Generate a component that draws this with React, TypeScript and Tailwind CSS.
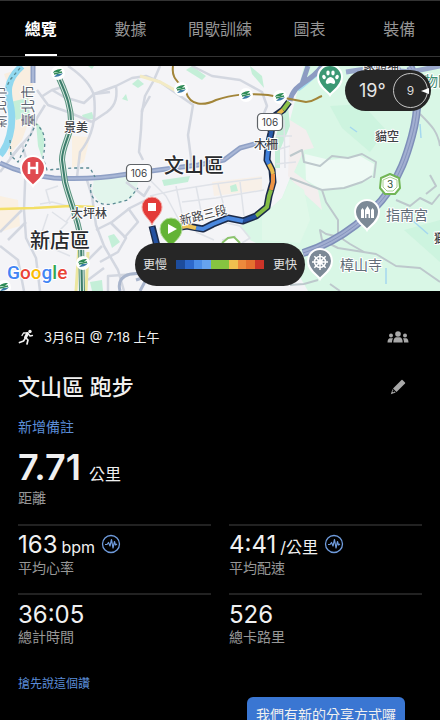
const tabs = ['總覽', '數據', '間歇訓練', '圖表', '裝備'];

const paceColors = [
  'bg-[#1d4c9c]',
  'bg-[#2d69cc]',
  'bg-[#4c8ee8]',
  'bg-[#66a3ef]',
  'bg-[#86c440]',
  'bg-[#86c440]',
  'bg-[#f0c04f]',
  'bg-[#ed8a3c]',
  'bg-[#e4702f]',
  'bg-[#cb3428]',
];

const minorRoads = [
  'M37 90 L48 105 L68 112 L92 122',
  'M41 97 L52 90 L66 86 M52 90 L64 97 L84 103 L94 94 L110 92',
  'M68 66 C80 74 91 84 94 96 C97 122 90 140 80 152 L77 177',
  'M94 94 L116 86 L132 78 L146 76 L160 82 L193 105 L188 135 L192 166',
  'M116 86 C118 100 114 108 104 114 L92 122',
  'M150 96 L142 110 L141 130 L139 152 L143 160',
  'M160 66 L154 80 L145 96 L142 112',
  'M192 66 L212 76 L240 80 L262 92 L267 106 L262 118',
  'M37 118 L45 105 M37 118 L31 134 L10 158',
  'M0 172 L22 144 L26 158 L24 210 L26 238 L36 258 L40 291',
  'M0 232 L22 210 M0 246 L18 260 L24 291 M8 240 L26 222',
  'M86 177 L92 196 L96 225 L104 246 L118 270 L124 291',
  'M96 230 L112 222 L130 208 L146 200 M110 222 L126 238 L118 252 L100 262',
  'M126 182 L144 196 L150 186 M128 208 L138 222 L124 238',
  'M86 262 L102 246 M88 280 L104 268 M108 291 L108 276 L136 274',
];

const lanes = [
  'M40 204 L52 202 L68 206 L88 214',
  'M50 204 L46 190 L58 186 M52 212 L66 222 L72 214 M58 232 L68 222',
  'M48 214 L42 232 L56 250 L70 256',
  'M150 180 L166 196 L180 222 M176 186 L182 214 M150 196 L176 190 L214 184 L262 178',
  'M182 202 L216 198 L264 190 M196 186 L202 216 M218 184 L226 214 M240 182 L244 216',
  'M222 222 L240 226 L250 238 L242 243 M236 236 L222 240 M196 232 L214 240',
  'M276 150 L290 146 M276 136 L292 136 M284 120 L285 168 M276 164 L296 162',
];

const hillRoads = [
  'M290 156 L302 150 L304 162 L320 166 L332 156 L348 158 L362 154 L376 162 L374 178',
  'M290 178 L306 184 L322 190 L326 202 L338 220 L338 236 L350 244 L364 252',
  'M322 190 L344 188 L362 182 L372 176',
  'M344 238 L326 234 L320 230 L322 240 L338 248 L376 254 L396 266 L420 268 L440 282',
  'M396 200 L410 206 L420 198 L432 204 L440 194 M430 175 L436 186 L426 194',
  'M420 114 C432 126 438 132 440 146',
  'M304 284 L318 280 M330 284 L340 291 M290 285 L304 284',
];

const parks = [
  'M10 102 L28 98 L30 116 L16 120 Z',
  'M82 115 L92 112 L94 119 L84 120 Z',
  'M122 99 L126 94 L128 101 Z',
  'M132 84 L138 79 L144 84 L138 88 Z',
  'M88 66 L94 66 L92 69 Z',
  'M36 122 C44 128 46 140 42 158 L38 146 Z',
  'M108 236 L114 234 L120 242 L112 248 Z',
  'M90 282 L102 280 L103 291 L92 291 Z',
  'M162 180 L190 176 L188 182 L164 186 Z',
  'M230 186 L236 184 L238 191 L231 192 Z',
  'M192 66 L206 76 L202 80 L186 70 Z',
  'M250 66 L262 76 L264 88 L252 74 Z',
  'M282 114 L288 106 L290 126 L280 150 L280 168 L275 168 L275 140 Z',
];

function StationMark({ x, y }: { x: number; y: number }) {
  return (
    <g transform={`translate(${x} ${y})`}>
      <circle r="7" fill="#fff" />
      <path d="M-5 0 C-4 -3 0 -4 4 -4 L1 -1 C-1 -1 -3 -1 -5 0Z" fill="#2f8b57" />
      <path d="M-4 4 C-1 4 3 3 5 0 C3 1 1 1 -1 1Z" fill="#3b7ca6" />
      <path d="M-4 1 L4 -1" stroke="#2f8b57" strokeWidth="1.5" />
    </g>
  );
}

function RouteShield({ x, y }: { x: number; y: number }) {
  return (
    <g transform={`translate(${x} ${y})`}>
      <rect x="-12.5" y="-8.5" width="25" height="17" rx="4" fill="#fff" stroke="#5f6368" strokeWidth="1.2" />
      <text y="4" textAnchor="middle" fontSize="10" fill="#3c4043">106</text>
    </g>
  );
}

function Pin({ x, y, color }: { x: number; y: number; color: string }) {
  return (
    <path
      transform={`translate(${x} ${y})`}
      d="M0 17 C-2 13 -12 9 -12 -1 A12 12 0 1 1 12 -1 C12 9 2 13 0 17Z"
      fill={color}
      stroke="#fff"
      strokeWidth="2"
    />
  );
}

function RunMap() {
  return (
    <svg
      viewBox="0 66 440 225"
      className="block aspect-[88/45] w-full font-['Inter','Noto_Sans_CJK_TC',sans-serif]"
      role="img"
      aria-label="路線地圖"
    >
      <rect y="66" width="440" height="225" fill="#f4f4f7" />
      {/* 地形 */}
      <path d="M304 66 L440 66 L440 291 L308 291 L290 260 L250 240 L240 226 L262 216 L282 198 L290 178 L296 152 L290 120 Z" fill="#d9f7e6" />
      <path d="M290 120 L306 130 L314 148 L304 150 L294 172 L318 190 L322 210 L300 190 L288 176 Z" fill="#f3eeee" />
      <path d="M305 154 L330 160 L360 156 L374 164 L372 178 L345 187 L322 190 L306 180 Z" fill="#effaf5" />
      <path d="M262 216 L282 198 L290 180 L304 190 L310 220 L300 243 L262 240 Z" fill="#e0f8e9" />
      <path d="M330 106 L362 104 L386 130 L370 152 L342 128 Z M404 230 L440 220 L440 262 Z" fill="#cdf4df" />
      <path d="M4 74 L28 66 L36 66 L30 100 L12 104 L10 90 Z M12 120 L30 118 L22 140 L8 156 Z" fill="#f9eee0" />
      <path d="M72 136 L90 137 L84 162 L72 168 Z M0 196 L18 200 L20 226 L0 232 Z" fill="#faf0e2" />
      <path d="M212 182 L262 176 L262 190 L214 196 Z" fill="#f8f0e8" />
      {parks.map((d) => (
        <path key={d} d={d} fill="#c4efd8" />
      ))}
      <path d="M94 178 L140 176 L134 196 L118 204 L100 203 L92 192 Z" fill="#e2f5ec" />
      {/* 河流 */}
      <path d="M22 66 C4 82 8 94 11 108 C14 128 8 146 0 155" fill="none" stroke="#91d8ef" strokeWidth="7" />
      <path d="M350 127 L357 132 M420 124 L421 138 M412 220 L428 234 M386 268 L386 284" stroke="#a5d8ef" strokeWidth="1.5" />
      <path d="M298 90 C310 82 314 74 326 70" fill="none" stroke="#a4dcef" strokeWidth="3" />
      {/* 道路 */}
      {minorRoads.map((d) => (
        <path key={d} d={d} fill="none" stroke="#d3d7e0" strokeWidth="2.5" strokeLinejoin="round" />
      ))}
      {lanes.map((d) => (
        <path key={d} d={d} fill="none" stroke="#dfe2e8" strokeWidth="1.5" strokeLinejoin="round" />
      ))}
      {hillRoads.map((d) => (
        <path key={d} d={d} fill="none" stroke="#bdc8cc" strokeWidth="2" strokeLinejoin="round" />
      ))}
      <path d="M140 76 L160 82 L182 94" fill="none" stroke="#f3ebc5" strokeWidth="3" />
      <path d="M0 209 L34 208 L70 206 L94 207" fill="none" stroke="#f3df67" strokeWidth="2.5" />
      <path d="M79 245 L76 291 M88 252 L86 291" stroke="#ede7a0" strokeWidth="3" />
      <g fill="none" strokeLinejoin="round">
        <path d="M33 66 L33 83 M0 163 C18 172 34 175 54 178 C88 180 110 177 128 174 L166 169 L198 165 L224 160 L240 148 L262 142" stroke="#8fa0c5" strokeWidth="5" />
        <path d="M33 66 L33 83 M0 163 C18 172 34 175 54 178 C88 180 110 177 128 174 L166 169 L198 165 L224 160 L240 148 L262 142" stroke="#a9b7d6" strokeWidth="2" />
        <path d="M290 101 C294 82 310 84 322 66 M302 84 L308 66" stroke="#8c9bc2" strokeWidth="5" />
        <path d="M410 66 C420 82 419 110 412 136 C406 158 400 174 388 192 C374 212 344 240 303 253" stroke="#7e8fb9" strokeWidth="8" />
        <path d="M410 66 C420 82 419 110 412 136 C406 158 400 174 388 192 C374 212 344 240 303 253" stroke="#a2afd1" strokeWidth="5" />
        <path d="M410 66 C420 82 419 110 412 136 C406 158 400 174 388 192 C374 212 344 240 303 253" stroke="#8594bd" strokeWidth="1" />
        <path d="M346 72 L372 68 L410 72 L440 66 M396 66 L404 76" stroke="#98a6ca" strokeWidth="5" />
        <path d="M140 291 L148 276 L136 280 M120 291 C116 276 130 272 142 274" stroke="#a9b5cc" strokeWidth="3" />
      </g>
      <g fill="none" stroke="#5a8a94" strokeWidth="1.3" strokeDasharray="3 3">
        <path d="M20 68 L10 80 L6 88 M10 140 L11 156 L18 162 L32 132 L36 124 C46 132 46 142 43 158 L47 170 L72 168 L90 168 L95 177" />
        <path d="M91 184 C88 200 100 206 112 204 L128 200 L138 188" />
      </g>
      {/* 捷運 */}
      <g fill="none" strokeLinejoin="round">
        <path d="M59 78 C66 94 72 108 71 126 C68 140 62 148 62 160 L65 182 C70 202 78 218 81 240 L82 291" stroke="#5a947f" strokeWidth="6" />
        <path d="M59 78 C66 94 72 108 71 126 C68 140 62 148 62 160 L65 182 C70 202 78 218 81 240 L82 291" stroke="#d9e9e2" strokeWidth="4" />
        <path d="M59 78 C66 94 72 108 71 126 C68 140 62 148 62 160 L65 182 C70 202 78 218 81 240 L82 291" stroke="#3c7d6b" strokeWidth="2" />
        <path d="M173 66 C171 80 180 82 186 92 C190 106 204 106 216 100 C232 95 244 93 268 95 L290 99 L306 102 C314 102 316 98 322 96" stroke="#a28539" strokeWidth="2" />
      </g>
      <StationMark x={58} y={73} />
      <StationMark x={181} y={89} />
      <StationMark x={246} y={95} />
      <StationMark x={280} y={97} />
      <StationMark x={83} y={263} />
      <StationMark x={4} y={287} />
      <RouteShield x={139} y={173} />
      {/* 跑步路線 */}
      <g fill="none" strokeLinejoin="round">
        <path d="M289 102 L283 110 L273 117 L271 133 L268 146 L267 160 L272 170 L273 182 L269 196 L267 207 L256 216 L243 221 L228 218 L213 224 L203 229 L187 226 L175 228 M152 226 L157 246" stroke="#1b2b4a" strokeWidth="7" />
        <g strokeWidth="4">
          <path d="M289 102 L283 110" stroke="#8fc34b" />
          <path d="M283 110 L278 114" stroke="#e8b84a" />
          <path d="M278 114 L273 117 L271 133 L269 144" stroke="#285baa" />
          <path d="M269 144 L268 150 L267 160 L269 164" stroke="#3f7fdb" />
          <path d="M269 164 L272 170 L273 174" stroke="#e9bd50" />
          <path d="M273 174 L273 182 L271 190" stroke="#ed9344" />
          <path d="M271 190 L269 196 L267 207 L256 216" stroke="#86bd45" />
          <path d="M256 216 L243 221" stroke="#2451a0" />
          <path d="M243 221 L228 218 L213 224 L203 229 L196 228" stroke="#4a88df" />
          <path d="M196 228 L187 226 L182 227" stroke="#ecc258" />
          <path d="M152 227 L157 246" stroke="#2451a0" />
        </g>
      </g>
      <RouteShield x={270} y={122} />
      {/* 地名 */}
      <g fill="#3f4246" stroke="#fff" strokeWidth="2" strokeLinejoin="round" className="[paint-order:stroke]">
        <text x="64" y="132" fontSize="12" fontWeight="500">景美</text>
        <text x="71" y="218" fontSize="12" fontWeight="500">大坪林</text>
        <text x="254" y="149" fontSize="12" fontWeight="500">木柵</text>
        <text x="375" y="141" fontSize="12" fontWeight="500">貓空</text>
        <text x="363" y="70" fontSize="12" fontWeight="500">象頭埔</text>
        <text x="434" y="243" fontSize="12" fontWeight="500">獅</text>
        <text transform="translate(181 225) rotate(-14)" fontSize="12">新路三段</text>
        <text transform="translate(33 127) rotate(-90)" fontSize="14" fill="#5b6470">臺北市</text>
        <text transform="translate(5 128) rotate(-90)" fontSize="14" fill="#5b6470">新北市</text>
        <text x="164" y="173" fontSize="20" fontWeight="500" fill="#292b2e">文山區</text>
        <text x="30" y="248" fontSize="20" fontWeight="500" fill="#292b2e">新店區</text>
        <text x="386" y="220" fontSize="14" fill="#626c78">指南宮</text>
        <text x="340" y="270" fontSize="14" fill="#626c78">樟山寺</text>
        <text x="424" y="86" fontSize="14" fill="#3d8d72">物園</text>
      </g>
      <g transform="translate(390 184)">
        <path d="M0 -10 L9 -6 L10 4 L5 10 L-5 10 L-10 4 L-9 -6Z" fill="#fff" stroke="#72b656" strokeWidth="2" strokeLinejoin="round" />
        <path d="M0 -7 L7 -4 L7 3 L3 7 L-3 7 L-7 3 L-7 -4Z" fill="#fff" stroke="#a6d190" strokeWidth="1" />
        <text y="4" textAnchor="middle" fontSize="10" fill="#34513a">3</text>
      </g>
      <path d="M222 243 L228 238 L234 237 L240 243" fill="#fff" stroke="#8bc36c" strokeWidth="2" />
      {/* 地標 */}
      <Pin x={33} y={169} color="#e04a50" />
      <path d="M29 162 V174 M37 162 V174 M29 168 H37" stroke="#fff" strokeWidth="2.5" />
      <Pin x={330} y={78} color="#3c9874" />
      <g fill="#fff">
        <ellipse cx="324" cy="77" rx="1.7" ry="2.3" transform="rotate(-25 324 77)" />
        <ellipse cx="328" cy="73" rx="1.7" ry="2.4" />
        <ellipse cx="333" cy="73" rx="1.7" ry="2.4" />
        <ellipse cx="337" cy="77" rx="1.7" ry="2.3" transform="rotate(25 337 77)" />
        <path d="M330.500 77 C333 77 336 81 335 83 C334 85 332 83 330.500 83 C329 83 327 85 326 83 C325 81 328 77 330.500 77Z" />
      </g>
      <Pin x={367} y={213} color="#7c8996" />
      <path d="M361 218 V210 L362.500 208 L364 210 V218Z M365 218 V210 L367.500 206 L370 210 V218 H368.500 V214 H366.500 V218Z M371 218 V210 L372.500 208 L374 210 V218Z" fill="#fff" />
      <Pin x={320} y={262} color="#7c8996" />
      <g fill="none" stroke="#fff" strokeWidth="1.5">
        <circle cx="320" cy="262" r="5.500" />
        <circle cx="320" cy="262" r="2" />
        <path d="M320 254 V270 M312 262 H328 M314.300 256.300 L325.700 267.700 M325.700 256.300 L314.300 267.700" />
      </g>
      {/* 終點與起點 */}
      <path d="M152 225 C150 219 142 215 142 207 A10 10 0 1 1 162 207 C162 215 154 219 152 225Z" fill="#e33b39" stroke="#f3a9a4" strokeWidth="1" />
      <rect x="148" y="203" width="8" height="8" fill="#fff" />
      <path d="M171 247 C169 242 160 238 160 229 A11 11 0 1 1 182 229 C182 238 173 242 171 247Z" fill="#63b335" stroke="#b4dc9b" strokeWidth="1" />
      <path d="M168 224 L177 229 L168 234Z" fill="#fff" />
      <text x="7" y="279" fontSize="19" fontWeight="500" stroke="#fff" strokeWidth="2" className="font-['Roboto','Inter',sans-serif] [paint-order:stroke]">
        <tspan fill="#4285f4">G</tspan>
        <tspan fill="#ea4335">o</tspan>
        <tspan fill="#fbbc05">o</tspan>
        <tspan fill="#4285f4">g</tspan>
        <tspan fill="#34a853">l</tspan>
        <tspan fill="#ea4335">e</tspan>
      </text>
    </svg>
  );
}

function RunnerIcon() {
  return (
    <svg viewBox="0 0 16 16" className="size-4" fill="none" stroke="#f0f0f0" strokeLinecap="round" strokeLinejoin="round" aria-hidden="true">
      <circle cx="12" cy="2.500" r="1.700" fill="#f0f0f0" stroke="none" />
      <path d="M9.500 4.500 L7.500 8.500" strokeWidth="3" />
      <path d="M9 3.800 L5.500 4 L4 6.500 M10.500 5 L12 7 L14.500 6.500" strokeWidth="1.300" />
      <path d="M7.500 9 L5.500 12 L1.500 13.500 M8 9 L10 11 L9 15" strokeWidth="1.700" />
    </svg>
  );
}

function PeopleIcon() {
  return (
    <svg viewBox="0 0 22 12" className="h-3 w-[22px]" fill="currentColor" aria-hidden="true">
      <circle cx="11" cy="3" r="2.800" />
      <path d="M6.300 11.500 C6.300 8.500 7.500 6.600 9 6.300 H13 C14.500 6.600 15.700 8.500 15.700 11.500Z" />
      <circle cx="4" cy="4.500" r="2" />
      <path d="M0.500 11.500 C0.500 9 1.500 7.300 3 7.300 H6 C5.300 8.500 5 9.800 5 11.500Z" />
      <circle cx="18" cy="4.500" r="2" />
      <path d="M21.500 11.500 C21.500 9 20.500 7.300 19 7.300 H16 C16.700 8.500 17 9.800 17 11.500Z" />
    </svg>
  );
}

function PencilIcon() {
  return (
    <svg viewBox="0 0 16 16" className="size-4" fill="currentColor" aria-hidden="true">
      <path d="M11.500 1 Q12 0.500 12.500 1 L15 3.500 Q15.500 4 15 4.500 L6.500 13 L3 9.500Z" />
      <path d="M2.500 10.300 L5.700 13.500 L0.800 15.200Z" />
      <circle cx="3.500" cy="12.200" r="1" fill="#000" />
    </svg>
  );
}

function PulseIcon() {
  return (
    <svg viewBox="0 0 20 20" className="size-5" fill="none" stroke="#6f9bdc" aria-hidden="true">
      <circle cx="10" cy="10" r="8.500" strokeWidth="1.300" />
      <path d="M4 10.500 H6 L7.500 8.500 L9 12 L10.500 5.500 L12 14 L13.500 7.500 L14.500 11 L16 10" strokeWidth="1.200" strokeLinejoin="round" />
    </svg>
  );
}

interface StatProps {
  value: string;
  unit?: string;
  label: string;
  pulse?: boolean;
}

function Stat({ value, unit, label, pulse }: StatProps) {
  return (
    <div className="h-[69px] border-t-2 border-[#222] pt-1">
      <dd className="flex h-7 items-center">
        <span className="flex items-baseline gap-1 pt-1">
          <span className="text-2xl leading-7">{value}</span>
          {unit && <span className="text-base leading-7">{unit}</span>}
        </span>
        {pulse && (
          <button type="button" aria-label={`${label}圖表`} className="ml-1.5">
            <PulseIcon />
          </button>
        )}
      </dd>
      <dt className="text-sm leading-5 text-[#979797]">{label}</dt>
    </div>
  );
}

export default function App() {
  return (
    <div className="min-h-screen overflow-hidden bg-black font-['Inter','Noto_Sans_CJK_TC',sans-serif] text-[#f0f0f0]">
      <nav className="border-y border-[#333] text-base">
        <div className="-mx-1 grid h-[55px] grid-cols-5">
          {tabs.map((tab, index) => (
            <button
              key={tab}
              type="button"
              className={
                index === 0
                  ? 'justify-self-center border-b-2 border-white pt-0.5 font-bold text-white'
                  : 'justify-self-center border-b-2 border-transparent pt-0.5 text-[#959595]'
              }
            >
              {tab}
            </button>
          ))}
        </div>
      </nav>

      <section className="relative mt-[9px]">
        <RunMap />
        <div className="absolute top-1 right-[9px] flex h-[41px] w-[86px] items-center justify-between rounded-full bg-[#262626] pr-[3px] pl-[14px]">
          <span className="text-lg text-[#e6e6e6]">19°</span>
          <span className="relative flex size-[35px] items-center justify-center rounded-full border border-[#c4c4c4] text-xs text-[#dcdcdc]">
            9
            <svg viewBox="0 0 8 6" className="absolute -right-0.5 h-1.5 w-2" aria-hidden="true">
              <path d="M0 3 L8 0 V6Z" fill="#fff" />
            </svg>
          </span>
        </div>
        <div className="absolute inset-x-0 bottom-[5px] mx-auto flex h-[43px] w-[170px] items-center justify-between rounded-full bg-[#262626] px-2 text-xs text-[#e4e4e4]">
          <span>更慢</span>
          <span className="flex h-[9px] w-[88px]">
            {paceColors.map((color, index) => (
              <span key={index} className={`flex-1 ${color}`} />
            ))}
          </span>
          <span>更快</span>
        </div>
      </section>

      <main className="px-[18px] pt-9">
        <div className="flex h-5 items-center">
          <RunnerIcon />
          <time className="ml-[10px] text-[13px] leading-5">3月6日 @ 7:18 上午</time>
          <button type="button" aria-label="參與者" className="mr-[13px] ml-auto text-[#a8a8a8]">
            <PeopleIcon />
          </button>
        </div>

        <div className="mt-6 flex h-8 items-center justify-between">
          <h1 className="text-[22px] leading-8 font-medium">文山區 跑步</h1>
          <button type="button" aria-label="編輯" className="mr-4 text-[#a8a8a8]">
            <PencilIcon />
          </button>
        </div>

        <button type="button" className="mt-[14px] block text-sm leading-5 text-[#5b8dd8]">
          新增備註
        </button>

        <dl>
          <div className="mt-3">
            <dd className="flex h-[39px] items-baseline gap-2">
              <span className="text-4xl leading-9 font-semibold">7.71</span>
              <span className="text-base leading-6">公里</span>
            </dd>
            <dt className="text-sm leading-5 text-[#979797]">距離</dt>
          </div>
          <div className="mt-4 grid grid-cols-2 gap-x-[18px]">
            <Stat value="163" unit="bpm" label="平均心率" pulse />
            <Stat value="4:41" unit="/公里" label="平均配速" pulse />
            <Stat value="36:05" label="總計時間" />
            <Stat value="526" label="總卡路里" />
          </div>
        </dl>

        <button type="button" className="mt-3 block text-xs leading-5 text-[#5b8dd8]">
          搶先說這個讚
        </button>
      </main>

      <div role="tooltip" className="fixed right-[35px] -bottom-3 h-[35px] rounded-md bg-[#3a76d2] px-[9px] text-sm leading-[35px]">
        我們有新的分享方式囉
      </div>
    </div>
  );
}
